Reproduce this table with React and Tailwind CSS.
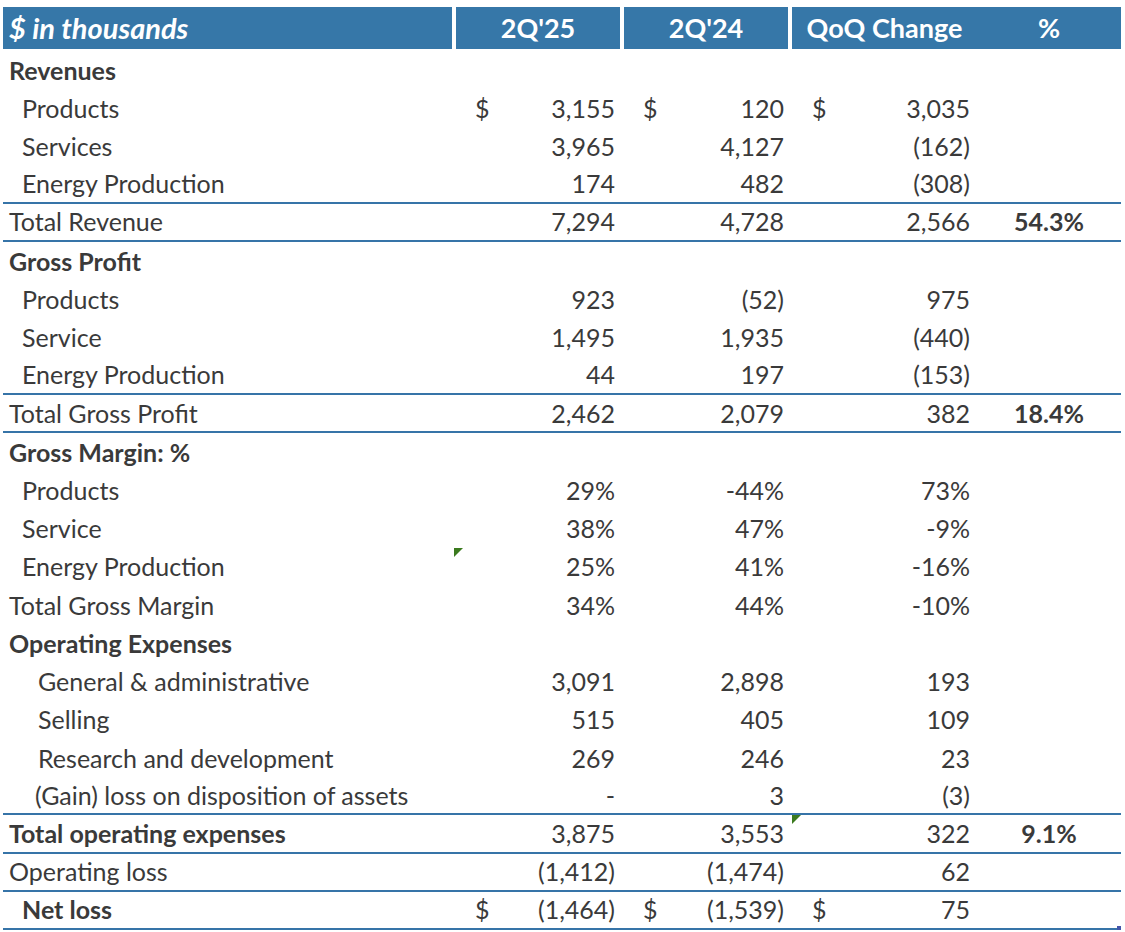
const rows = [
  { label: "Revenues", bold: true },
  { label: "Products", indent: 1, d1: true, v1: "3,155", d2: true, v2: "120", d3: true, v3: "3,035" },
  { label: "Services", indent: 1, v1: "3,965", v2: "4,127", v3: "(162)" },
  { label: "Energy Production", indent: 1, v1: "174", v2: "482", v3: "(308)", line: true },
  { label: "Total Revenue", v1: "7,294", v2: "4,728", v3: "2,566", pct: "54.3%", line: true },
  { label: "Gross Profit", bold: true },
  { label: "Products", indent: 1, v1: "923", v2: "(52)", v3: "975" },
  { label: "Service", indent: 1, v1: "1,495", v2: "1,935", v3: "(440)" },
  { label: "Energy Production", indent: 1, v1: "44", v2: "197", v3: "(153)", line: true },
  { label: "Total Gross Profit", v1: "2,462", v2: "2,079", v3: "382", pct: "18.4%", line: true },
  { label: "Gross Margin: %", bold: true },
  { label: "Products", indent: 1, v1: "29%", v2: "-44%", v3: "73%" },
  { label: "Service", indent: 1, v1: "38%", v2: "47%", v3: "-9%" },
  { label: "Energy Production", indent: 1, v1: "25%", v2: "41%", v3: "-16%", mark: "left-[451px]" },
  { label: "Total Gross Margin", v1: "34%", v2: "44%", v3: "-10%" },
  { label: "Operating Expenses", bold: true },
  { label: "General & administrative", indent: 2, v1: "3,091", v2: "2,898", v3: "193" },
  { label: "Selling", indent: 2, v1: "515", v2: "405", v3: "109" },
  { label: "Research and development", indent: 2, v1: "269", v2: "246", v3: "23" },
  { label: "(Gain) loss on disposition of assets", indent: 3, v1: "-", v2: "3", v3: "(3)", line: true },
  { label: "Total operating expenses", bold: true, v1: "3,875", v2: "3,553", v3: "322", pct: "9.1%", line: true, mark: "left-[789px]" },
  { label: "Operating loss", v1: "(1,412)", v2: "(1,474)", v3: "62", line: true },
  { label: "Net loss", bold: true, indent: 1, d1: true, v1: "(1,464)", d2: true, v2: "(1,539)", d3: true, v3: "75", line: true },
];

const indents = ["pl-[6px]", "pl-[19px]", "pl-[35px]", "pl-[32px]"];

export default function App() {
  return (
    <div className="w-[1125px] h-[932px] bg-white pt-[7px] pl-[3px] text-[#3a3a3a] font-['Lato','Open_Sans',sans-serif] text-[25px] relative overflow-hidden">
      <div className="w-[1118px]">
        {/* header */}
        <div className="flex gap-[4px] h-[42px] mb-[2px] text-white font-bold text-[27px]">
          <div className="w-[449px] bg-[#3677a8] flex items-center pl-[6px] italic text-[29px]">$ in thousands</div>
          <div className="w-[164px] bg-[#3677a8] flex items-center justify-center">2Q'25</div>
          <div className="w-[164px] bg-[#3677a8] flex items-center justify-center">2Q'24</div>
          <div className="w-[329px] bg-[#3677a8] flex items-center">
            <span className="w-[185px] text-center">QoQ Change</span>
            <span className="w-[144px] text-center">%</span>
          </div>
        </div>

        {rows.map((r, i) => (
          <div
            key={i}
            className={`relative grid grid-cols-[453px_168px_168px_185px_144px] h-[38.23px] items-center leading-none ${
              r.line ? "border-b-2 border-[#3674a8]" : ""
            }`}
          >
            {r.mark && (
              <span className={`absolute ${r.mark} top-0 w-0 h-0 border-t-[9px] border-r-[9px] border-t-[#3b7a1e] border-r-transparent`} />
            )}
            <div className={`${indents[r.indent || 0]} ${r.bold ? "font-bold" : ""}`}>{r.label}</div>
            <div className="flex justify-between pl-[19px] pr-[9px]">
              <span>{r.d1 ? "$" : ""}</span>
              <span>{r.v1}</span>
            </div>
            <div className="flex justify-between pl-[19px] pr-[8px]">
              <span>{r.d2 ? "$" : ""}</span>
              <span>{r.v2}</span>
            </div>
            <div className="flex justify-between pl-[20px] pr-[7px]">
              <span>{r.d3 ? "$" : ""}</span>
              <span>{r.v3}</span>
            </div>
            <div className="text-center font-bold">{r.pct}</div>
          </div>
        ))}
      </div>
      <span className="absolute right-[4px] bottom-[2px] w-[4px] h-[4px] bg-[#4455aa]" />
    </div>
  );
}
